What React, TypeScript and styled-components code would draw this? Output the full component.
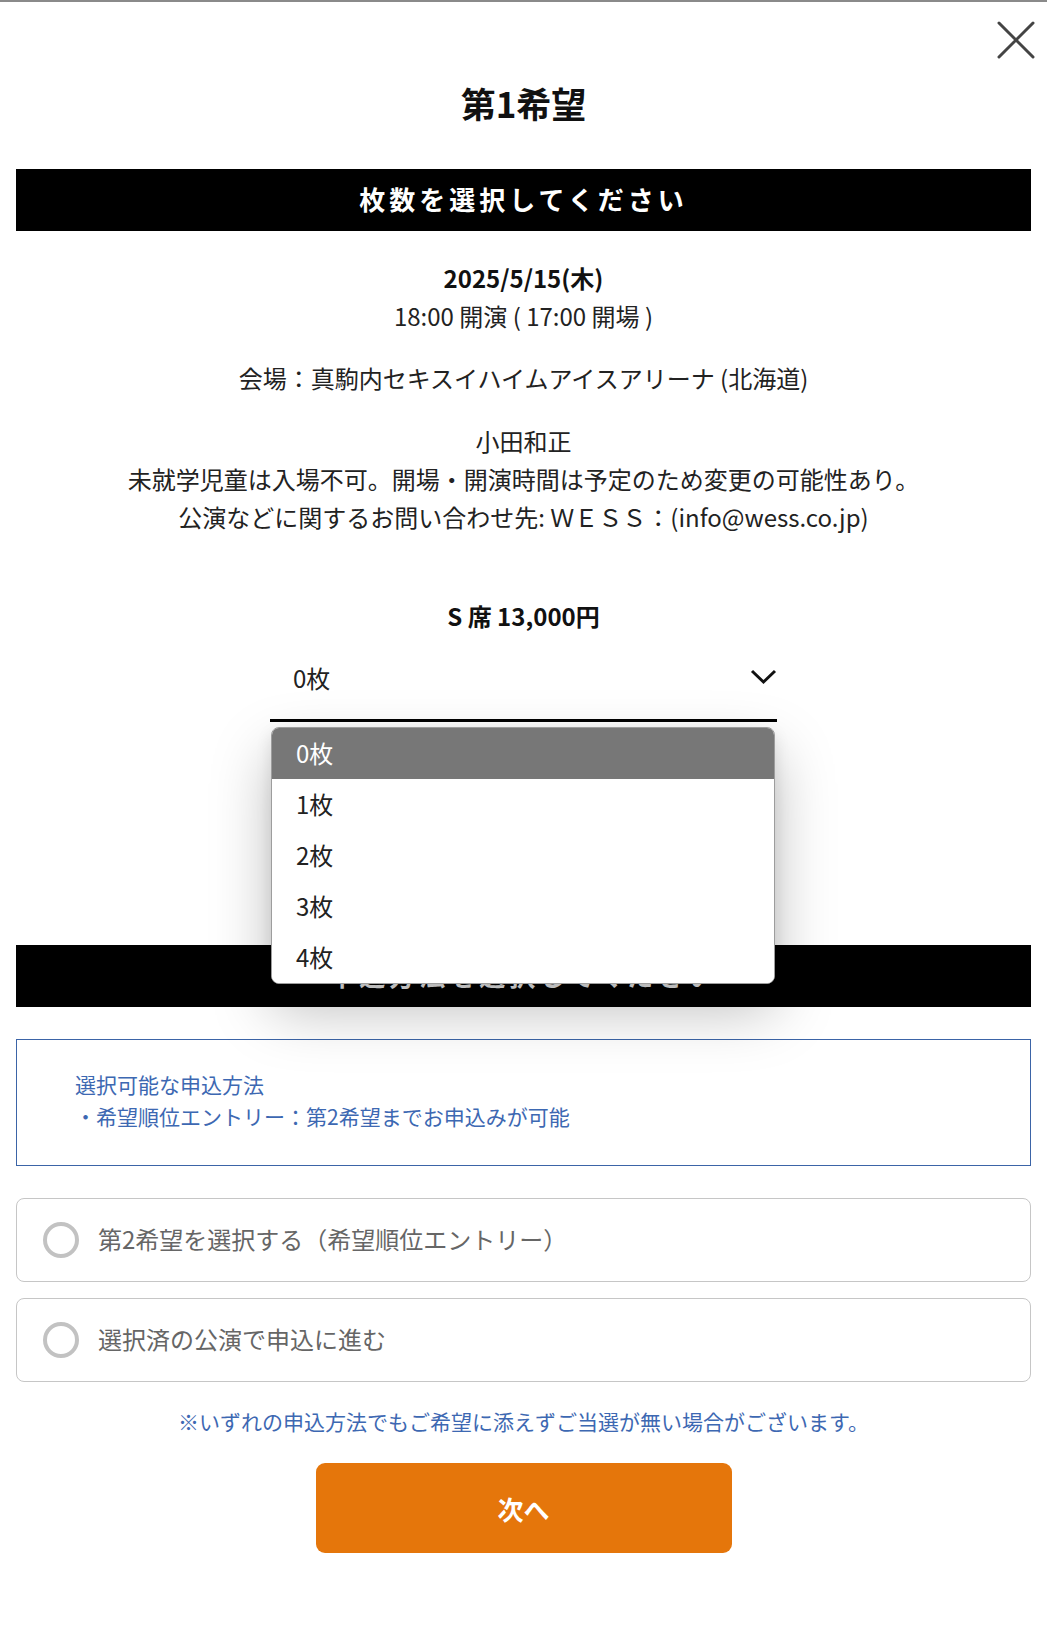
import React from "react";
import styled, { createGlobalStyle } from "styled-components";

const GlobalStyle = createGlobalStyle`
  html, body { margin: 0; padding: 0; background: #fff; }
  body {
    font-family: "Noto Sans CJK JP", "Noto Sans", "Liberation Sans", sans-serif;
    color: #111;
  }
  * { box-sizing: border-box; }
`;

const Page = styled.div`
  width: 1047px;
  min-height: 1633px;
  background: #fff;
  display: flex;
  flex-direction: column;
`;

const TopLine = styled.div`
  height: 2px;
  background: #8a8a8a;
`;

const CloseRow = styled.div`
  display: flex;
  justify-content: flex-end;
  padding: 19px 12px 0 0;
`;

const CloseButton = styled.button`
  width: 38px;
  height: 38px;
  padding: 0;
  border: none;
  background: none;
  display: flex;
  align-items: center;
  justify-content: center;
`;

const Title = styled.h1`
  margin: 22px 0 0;
  font-size: 35px;
  line-height: 44px;
  font-weight: 700;
  text-align: center;
  color: #111;
`;

const Content = styled.div`
  padding: 0 16px;
  display: flex;
  flex-direction: column;
`;

const SectionBar = styled.div<{ $top: number }>`
  margin-top: ${(p) => p.$top}px;
  height: 62px;
  padding-bottom: 3px;
  background: #000;
  color: #fff;
  font-size: 26px;
  font-weight: 700;
  letter-spacing: 4px;
  display: flex;
  align-items: center;
  justify-content: center;
`;

const EventInfo = styled.div`
  margin-top: 28px;
  text-align: center;
  font-size: 24px;
  line-height: 38px;
  color: #222;
`;

const InfoBlock = styled.p<{ $gap: number }>`
  margin: ${(p) => p.$gap}px 0 0;
`;

const DateLine = styled.div`
  font-weight: 700;
  color: #111;
`;

const TicketArea = styled.div`
  margin-top: 61px;
  display: flex;
  flex-direction: column;
  align-items: center;
`;

const SeatLabel = styled.div`
  font-size: 24px;
  line-height: 38px;
  font-weight: 700;
  color: #111;
`;

const SelectWrap = styled.div`
  position: relative;
  width: 507px;
`;

const SelectBox = styled.div`
  height: 87px;
  border-bottom: 3px solid #000;
  display: flex;
  align-items: center;
  justify-content: space-between;
  padding: 0 0 0 23px;
  font-size: 24px;
  color: #222;
`;

const Dropdown = styled.ul`
  position: absolute;
  top: 92px;
  left: 1px;
  width: 504px;
  margin: 0;
  padding: 0;
  list-style: none;
  background: #fff;
  border: 1px solid #9d9d9d;
  border-radius: 8px;
  overflow: hidden;
  box-shadow: 0 26px 60px rgba(0, 0, 0, 0.26), 0 6px 16px rgba(0, 0, 0, 0.1);
  z-index: 10;
`;

const Option = styled.li<{ $active?: boolean }>`
  height: 51px;
  display: flex;
  align-items: center;
  padding: 0 0 3px 24px;
  font-size: 24px;
  color: ${(p) => (p.$active ? "#fff" : "#222")};
  background: ${(p) => (p.$active ? "#777777" : "#fff")};
`;

const Spacer = styled.div`
  height: 223px;
`;

const MethodBox = styled.div`
  margin-top: 32px;
  border: 1px solid #3b64a7;
  padding: 28px 58px 33px;
  font-size: 21px;
  line-height: 32px;
  color: #3d68b2;
`;

const MethodLine = styled.div``;

const Choices = styled.div`
  margin-top: 32px;
  display: flex;
  flex-direction: column;
  gap: 16px;
`;

const ChoiceRow = styled.label`
  height: 84px;
  border: 1px solid #c6c6c6;
  border-radius: 8px;
  display: flex;
  align-items: center;
  padding: 0 0 3px 26px;
  gap: 19px;
  font-size: 24px;
  color: #666;
`;

const RadioCircle = styled.span`
  width: 36px;
  height: 36px;
  margin-top: 3px;
  border: 4px solid #c2c2c2;
  border-radius: 50%;
  flex: none;
`;

const Note = styled.p`
  margin: 23px 0 0;
  text-align: center;
  font-size: 21px;
  line-height: 32px;
  color: #3d68b2;
`;

const ButtonRow = styled.div`
  margin-top: 26px;
  display: flex;
  justify-content: center;
`;

const NextButton = styled.button`
  width: 416px;
  height: 90px;
  border: none;
  border-radius: 9px;
  background: #e5760b;
  color: #fff;
  font-family: inherit;
  font-size: 26px;
  font-weight: 700;
`;

const options = ["0枚", "1枚", "2枚", "3枚", "4枚"];

export default function App() {
  return (
    <>
      <GlobalStyle />
      <Page>
        <TopLine />
        <CloseRow>
          <CloseButton aria-label="閉じる">
            <svg width="38" height="38" viewBox="0 0 38 38">
              <path d="M2 2 L36 36 M36 2 L2 36" stroke="#444" strokeWidth="3" strokeLinecap="round" />
            </svg>
          </CloseButton>
        </CloseRow>
        <Title>第1希望</Title>
        <Content>
          <SectionBar $top={44}>枚数を選択してください</SectionBar>
          <EventInfo>
            <DateLine>2025/5/15(木)</DateLine>
            <div>18:00 開演 ( 17:00 開場 )</div>
            <InfoBlock $gap={24}>会場：真駒内セキスイハイムアイスアリーナ (北海道)</InfoBlock>
            <InfoBlock $gap={25}>
              小田和正
              <br />
              未就学児童は入場不可。開場・開演時間は予定のため変更の可能性あり。
              <br />
              公演などに関するお問い合わせ先: ＷＥＳＳ：(info@wess.co.jp)
            </InfoBlock>
          </EventInfo>
          <TicketArea>
            <SeatLabel>S 席 13,000円</SeatLabel>
            <SelectWrap>
              <SelectBox>
                <span>0枚</span>
                <svg width="27" height="18" viewBox="0 0 27 18">
                  <polyline points="2,3 13.5,14 25,3" fill="none" stroke="#111" strokeWidth="3" />
                </svg>
              </SelectBox>
              <Dropdown>
                {options.map((o, i) => (
                  <Option key={o} $active={i === 0}>
                    {o}
                  </Option>
                ))}
              </Dropdown>
            </SelectWrap>
          </TicketArea>
          <Spacer />
          <SectionBar $top={0}>申込方法を選択してください</SectionBar>
          <MethodBox>
            <MethodLine>選択可能な申込方法</MethodLine>
            <MethodLine>・希望順位エントリー：第2希望までお申込みが可能</MethodLine>
          </MethodBox>
          <Choices>
            <ChoiceRow>
              <RadioCircle />
              第2希望を選択する（希望順位エントリー）
            </ChoiceRow>
            <ChoiceRow>
              <RadioCircle />
              選択済の公演で申込に進む
            </ChoiceRow>
          </Choices>
          <Note>※いずれの申込方法でもご希望に添えずご当選が無い場合がございます。</Note>
          <ButtonRow>
            <NextButton>次へ</NextButton>
          </ButtonRow>
        </Content>
      </Page>
    </>
  );
}
